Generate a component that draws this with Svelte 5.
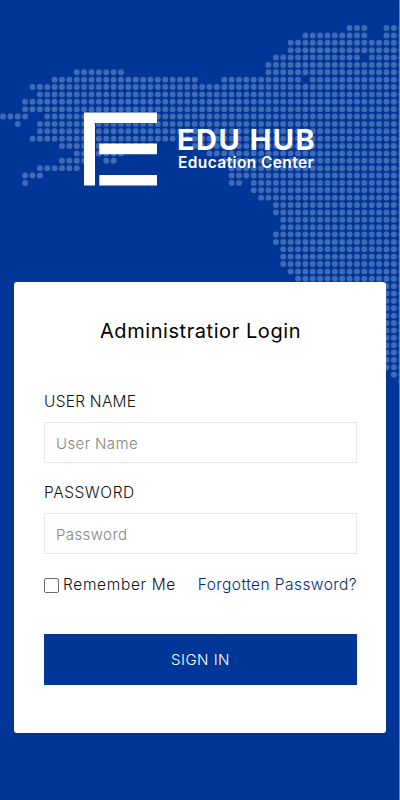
<script lang="ts">
  let username = $state("");
  let password = $state("");
  let remember = $state(false);

  const step = 7.375;

  // Dot map: column ranges [from, to] for every row
  const rows: number[][][] = [
    [[47, 49], [52, 54]],
    [[41, 49], [52, 54]],
    [[39, 54]],
    [[39, 54]],
    [[37, 48], [50, 54]],
    [[36, 54]],
    [[10, 16], [36, 54]],
    [[7, 26], [30, 40], [42, 54]],
    [[4, 54]],
    [[5, 54]],
    [[3, 54]],
    [[3, 54]],
    [[0, 3], [6, 54]],
    [[2, 2], [5, 54]],
    [[5, 54]],
    [[4, 23], [25, 54]],
    [[8, 20], [26, 54]],
    [[10, 11], [13, 16], [28, 54]],
    [[8, 11], [14, 15], [30, 54]],
    [[5, 10], [31, 54]],
    [[3, 5], [31, 54]],
    [[3, 3], [31, 32], [34, 54]],
    [[34, 54]],
    [[35, 54]],
    [[37, 54]],
    [[37, 54]],
    [[38, 54]],
    [[38, 54]],
    [[37, 54]],
    [[37, 54]],
    [[38, 54]],
    [[38, 54]],
    [[38, 54]],
    [[39, 54]],
    [[40, 54]],
    ...Array.from({ length: 12 }, () => [[52, 54]]),
    [[53, 54]],
    [[54, 54]],
  ];

  const dots = rows.flatMap((ranges, r) =>
    ranges.flatMap(([from, to]) =>
      Array.from({ length: to - from + 1 }, (_, i) => ({
        x: 3 + (from + i) * step,
        y: 28 + r * step,
      }))
    )
  );
</script>

<main class="page">
  <svg class="map" width="400" height="400" viewBox="0 0 400 400" aria-hidden="true">
    {#each dots as dot}
      <circle cx={dot.x} cy={dot.y} r="2.95" />
    {/each}
  </svg>

  <header class="brand">
    <svg width="73" height="74" viewBox="0 0 73 74" fill="#fff" aria-hidden="true">
      <path d="M0 .4H73V11H11V73.6H0z" />
      <path d="M15.3 31.6H73V42.2H15.3zM15.3 63H73V73.6H15.3z" />
    </svg>
    <div class="brand-text">
      <span class="brand-name">EDU HUB</span>
      <span class="brand-sub">Education Center</span>
    </div>
  </header>

  <form class="card" onsubmit={(e) => e.preventDefault()}>
    <h1>Administratior Login</h1>

    <label class="label user-label" for="username">USER NAME</label>
    <input class="field" id="username" type="text" placeholder="User Name" bind:value={username} />

    <label class="label password-label" for="password">PASSWORD</label>
    <input class="field" id="password" type="password" placeholder="Password" bind:value={password} />

    <div class="options">
      <label class="remember">
        <input type="checkbox" bind:checked={remember} />
        <span>Remember Me</span>
      </label>
      <a href="#forgot">Forgotten Password?</a>
    </div>

    <button type="submit">SIGN IN</button>
  </form>
</main>

<style>
  :global(body) {
    margin: 0;
    background: #003698;
  }

  .page {
    position: relative;
    box-sizing: border-box;
    height: 800px;
    padding: 112px 13px 0 14px;
    border-right: 1px solid #5c80c2;
    background: #003698;
    overflow: hidden;
    font-family: Inter, "Open Sans", sans-serif;
    font-weight: 300;
    color: #111;
  }

  .map {
    position: absolute;
    top: 0;
    left: 0;
    fill: #426bb6;
  }

  .brand {
    position: relative;
    display: flex;
    gap: 20px;
    height: 170px;
    padding-left: 70px;
    color: #fff;
  }

  .brand-text {
    display: flex;
    flex-direction: column;
    padding-top: 13px;
    white-space: nowrap;
  }

  .brand-name {
    font-size: 29px;
    font-weight: 700;
    line-height: 30px;
    letter-spacing: 1.5px;
  }

  .brand-sub {
    padding-left: 1px;
    font-size: 15.5px;
    font-weight: 600;
    line-height: 16px;
    letter-spacing: 0.4px;
  }

  .card {
    position: relative;
    box-sizing: border-box;
    display: flex;
    flex-direction: column;
    height: 451px;
    padding: 36px 29px 0 30px;
    border-radius: 3px;
    background: #fff;
  }

  h1 {
    margin: 0 0 48px;
    font-size: 20px;
    font-weight: 400;
    line-height: 26px;
    letter-spacing: 0.57px;
    text-align: center;
    white-space: nowrap;
    color: #000;
  }

  .label {
    margin-bottom: 10px;
    font-size: 15.5px;
    line-height: 20px;
  }

  .user-label {
    letter-spacing: 0.25px;
  }

  .password-label {
    margin-top: 20px;
    letter-spacing: 0.55px;
  }

  .field {
    box-sizing: border-box;
    width: 100%;
    height: 41px;
    padding: 2px 11px 0;
    border: 1px solid #e7e7e7;
    border-radius: 0;
    background: #fff;
    font: inherit;
    font-size: 15px;
    letter-spacing: 0.4px;
    outline: none;
  }

  .field::placeholder {
    color: #858585;
    opacity: 1;
  }

  .options {
    display: flex;
    justify-content: space-between;
    align-items: center;
    height: 20px;
    margin-top: 20px;
    font-size: 15.5px;
    white-space: nowrap;
  }

  .remember {
    display: flex;
    align-items: center;
    gap: 4px;
    letter-spacing: 0.65px;
  }

  .remember input {
    appearance: none;
    box-sizing: border-box;
    width: 15px;
    height: 15px;
    margin: 2px 0 0;
    border: 1px solid #6b6b6b;
    border-radius: 2px;
    background: #fff;
  }

  .remember input:checked {
    background: #003698;
  }

  a {
    color: #002a7c;
    letter-spacing: 0.44px;
    text-decoration: none;
  }

  button {
    height: 51px;
    margin-top: 40px;
    padding: 0 0 1px;
    border: 0;
    background: #003698;
    color: #fff;
    font: inherit;
    font-size: 15px;
    letter-spacing: 0.5px;
    cursor: pointer;
  }
</style>
